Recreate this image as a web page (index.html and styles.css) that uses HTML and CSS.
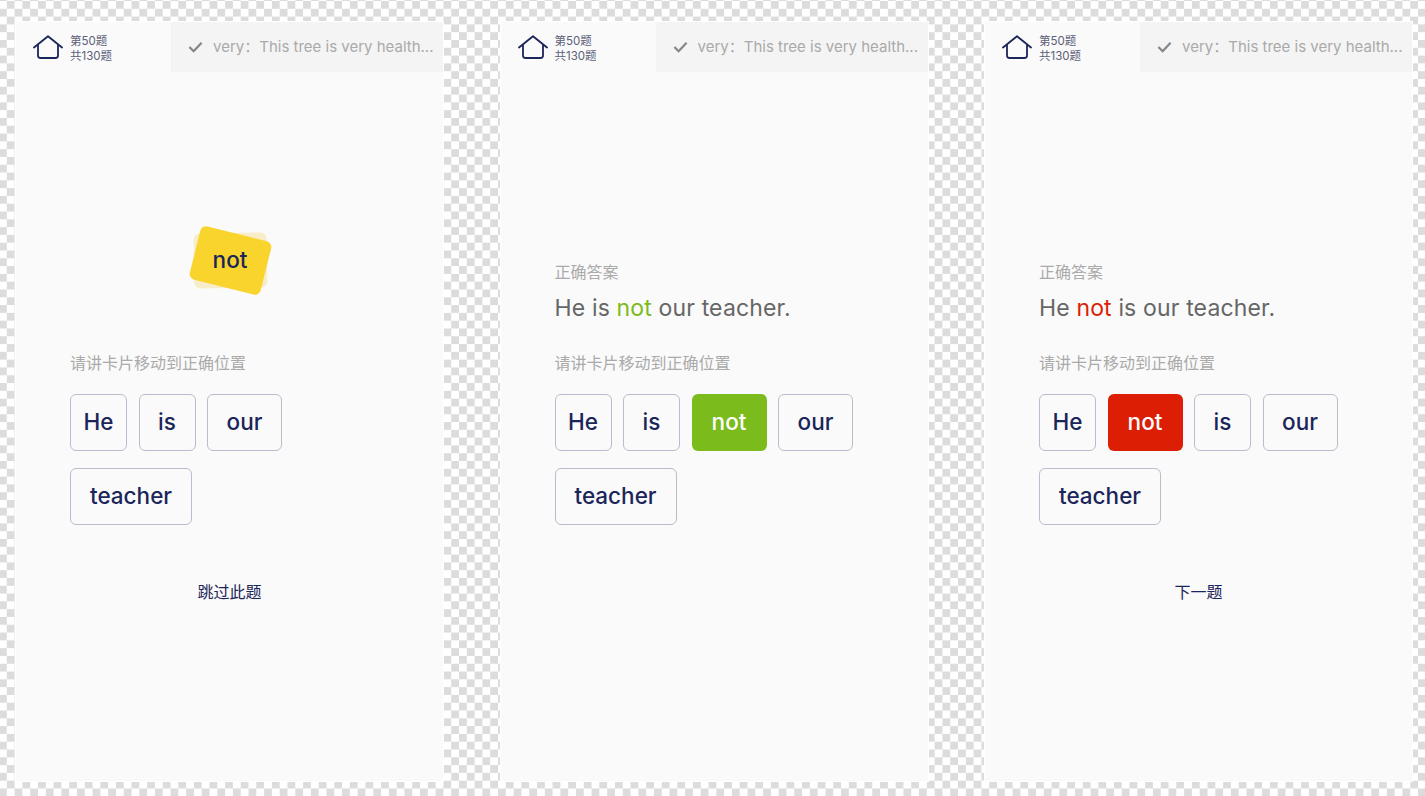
FILE: index.html
```html
<!DOCTYPE html>
<html lang="en">
<head>
    <meta charset="UTF-8">
    <meta name="viewport" content="width=device-width, initial-scale=1.0">
    <title>Sentence Cards</title>

    <link rel="stylesheet" href="styles.css">
</head>
<body>
    <div class="board">

        <!-- Screen 1: card not placed yet -->
        <section class="screen">
            <header class="top-bar">
                <div class="progress">
                    <svg class="home-icon" viewBox="0 0 30 24"><path d="M1 12.5 15 1.2l14 11.3M5 9.5v11a2.5 2.5 0 0 0 2.5 2.5h15a2.5 2.5 0 0 0 2.5-2.5v-11"/></svg>
                    <div class="progress-text">第50题<br>共130题</div>
                </div>
                <div class="last-answer">
                    <svg class="check-icon" viewBox="0 0 16 12"><path d="M1.5 6 6 10.5 14.5 1.5"/></svg>
                    <span class="last-answer-text">very：This tree is very health...</span>
                </div>
            </header>
            <div class="content">
                <div class="drag-area">
                    <div class="drag-shadow"></div>
                    <div class="drag-card"></div>
                    <div class="drag-label">not</div>
                </div>
                <p class="hint">请讲卡片移动到正确位置</p>
                <div class="cards">
                    <div class="card card-sm">He</div>
                    <div class="card card-sm">is</div>
                    <div class="card card-md">our</div>
                    <div class="card card-lg">teacher</div>
                </div>
                <a class="next-link">跳过此题</a>
            </div>
        </section>

        <!-- Screen 2: right answer -->
        <section class="screen">
            <header class="top-bar">
                <div class="progress">
                    <svg class="home-icon" viewBox="0 0 30 24"><path d="M1 12.5 15 1.2l14 11.3M5 9.5v11a2.5 2.5 0 0 0 2.5 2.5h15a2.5 2.5 0 0 0 2.5-2.5v-11"/></svg>
                    <div class="progress-text">第50题<br>共130题</div>
                </div>
                <div class="last-answer">
                    <svg class="check-icon" viewBox="0 0 16 12"><path d="M1.5 6 6 10.5 14.5 1.5"/></svg>
                    <span class="last-answer-text">very：This tree is very health...</span>
                </div>
            </header>
            <div class="content">
                <div class="answer">
                    <p class="answer-label">正确答案</p>
                    <p class="answer-text">He is <span class="right">not</span> our teacher.</p>
                </div>
                <p class="hint">请讲卡片移动到正确位置</p>
                <div class="cards">
                    <div class="card card-sm">He</div>
                    <div class="card card-sm">is</div>
                    <div class="card card-md card-right">not</div>
                    <div class="card card-md">our</div>
                    <div class="card card-lg">teacher</div>
                </div>
            </div>
        </section>

        <!-- Screen 3: wrong answer -->
        <section class="screen">
            <header class="top-bar">
                <div class="progress">
                    <svg class="home-icon" viewBox="0 0 30 24"><path d="M1 12.5 15 1.2l14 11.3M5 9.5v11a2.5 2.5 0 0 0 2.5 2.5h15a2.5 2.5 0 0 0 2.5-2.5v-11"/></svg>
                    <div class="progress-text">第50题<br>共130题</div>
                </div>
                <div class="last-answer">
                    <svg class="check-icon" viewBox="0 0 16 12"><path d="M1.5 6 6 10.5 14.5 1.5"/></svg>
                    <span class="last-answer-text">very：This tree is very health...</span>
                </div>
            </header>
            <div class="content">
                <div class="answer">
                    <p class="answer-label">正确答案</p>
                    <p class="answer-text">He <span class="wrong">not</span> is our teacher.</p>
                </div>
                <p class="hint">请讲卡片移动到正确位置</p>
                <div class="cards">
                    <div class="card card-sm">He</div>
                    <div class="card card-md card-wrong">not</div>
                    <div class="card card-sm">is</div>
                    <div class="card card-md">our</div>
                    <div class="card card-lg">teacher</div>
                </div>
                <a class="next-link">下一题</a>
            </div>
        </section>

    </div>
</body>
</html>
```

FILE: styles.css
```css
html, body {
    margin: 0;
    padding: 0;
    height: 100%;
}
body {
    font-family: Inter, "Noto Sans CJK SC", sans-serif;
    background-color: #fff;
    background-image: conic-gradient(#dcdcdc 25%, #fff 25% 50%, #dcdcdc 50% 75%, #fff 75%);
    background-size: 15.6px 15.6px;
    background-position: -1px 1px;
    overflow: hidden;
}
.board {
    display: flex;
    gap: 55.5px;
    padding: 21px 0 0 15px;
}
.screen {
    width: 429px;
    height: 761px;
    box-sizing: border-box;
    background-color: #fafafa;
    border: 1px solid #fff;
}
.top-bar {
    display: flex;
    height: 50px;
}
.progress {
    display: flex;
    align-items: center;
    width: 155px;
    padding-left: 17px;
    box-sizing: border-box;
}
.home-icon {
    flex: none;
    width: 30px;
    height: 24px;
    fill: none;
    stroke: #1a2559;
    stroke-width: 1.8;
    stroke-linecap: round;
    stroke-linejoin: round;
}
.progress-text {
    margin: 4px 0 0 7px;
    font-size: 11.5px;
    line-height: 15px;
    color: #5b6078;
}
.last-answer {
    flex: 1;
    display: flex;
    align-items: center;
    min-width: 0;
    padding: 0 0 4px 17px;
    box-sizing: border-box;
    background-color: #f4f4f4;
}
.check-icon {
    flex: none;
    width: 15px;
    height: 12px;
    margin-top: 4px;
    fill: none;
    stroke: #85858a;
    stroke-width: 2.4;
}
.last-answer-text {
    margin-left: 10px;
    font-size: 15px;
    color: #aaa;
    white-space: nowrap;
}
.content {
    padding: 0 54px;
}
.drag-area {
    position: relative;
    height: 281px;
}
.drag-shadow, .drag-card, .drag-label {
    position: absolute;
    left: 50%;
    top: 188px;
    width: 73px;
    height: 55px;
    margin: -27.5px 0 0 -36px;
    border-radius: 6px;
}
.drag-shadow {
    background-color: #f7edc9;
    transform: rotate(-1deg);
}
.drag-card {
    background-color: #f9d42c;
    transform: rotate(14deg);
}
.drag-label {
    margin-top: -28px;
    line-height: 55px;
    text-align: center;
    font-size: 22.5px;
    font-weight: 450;
    color: #1a2559;
}
.answer {
    height: 281px;
    box-sizing: border-box;
    padding-top: 190px;
}
.answer-label {
    margin: 0;
    font-size: 16px;
    line-height: 20px;
    color: #aaa;
}
.answer-text {
    margin: 11px 0 0;
    font-size: 23px;
    letter-spacing: 0.15px;
    line-height: 30px;
    color: #666;
}
.right {
    color: #7bbb1c;
}
.wrong {
    color: #dc1e05;
}
.hint {
    margin: 0;
    font-size: 16px;
    line-height: 20px;
    color: #aaa;
}
.cards {
    display: flex;
    flex-wrap: wrap;
    gap: 17px 11.5px;
    margin-top: 21px;
    width: 300px;
}
.card {
    display: flex;
    align-items: center;
    justify-content: center;
    height: 57px;
    box-sizing: border-box;
    padding-bottom: 3px;
    border: 1px solid #babdcd;
    border-radius: 6px;
    font-size: 22.5px;
    font-weight: 450;
    color: #1a2559;
}
.card-sm {
    width: 57px;
}
.card-md {
    width: 75px;
}
.card-lg {
    width: 122px;
}
.card-right, .card-wrong {
    border: none;
    color: #fff;
}
.card-right {
    background-color: #7bbb1c;
}
.card-wrong {
    background-color: #dc1e05;
}
.next-link {
    display: block;
    margin-top: 57px;
    text-align: center;
    font-size: 16px;
    line-height: 20px;
    color: #1a2559;
}
```
